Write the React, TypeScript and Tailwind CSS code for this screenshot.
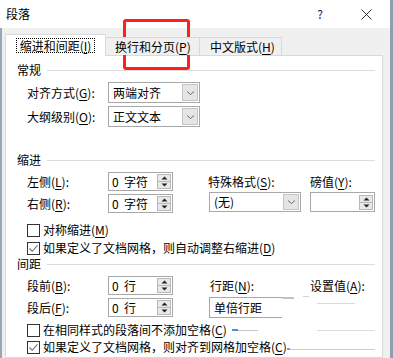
import React from 'react';

function Key({ text, k, colon = false }: { text: string; k: string; colon?: boolean }) {
  return (
    <span className="whitespace-nowrap">
      {text}(<span className="underline underline-offset-[2px]">{k}</span>){colon ? ':' : ''}
    </span>
  );
}

function Chevron() {
  return (
    <svg width="9" height="6" viewBox="0 0 9 6">
      <path d="M1 1.5 L4.5 4.5 L8 1.5" fill="none" stroke="#6b6b6b" strokeWidth="1" />
    </svg>
  );
}

function SelectBox({ text, className }: { text: string; className: string }) {
  return (
    <div className={`flex border border-[#a8a8a8] bg-white ${className}`}>
      <div className="flex-1 flex items-center pl-[4px]">{text}</div>
      <div className="w-[16px] m-px bg-[#e5e5e5] border border-[#c4c4c4] flex items-center justify-center">
        <Chevron />
      </div>
    </div>
  );
}

function Spin({ text, className }: { text: string; className: string }) {
  return (
    <div className={`flex items-center border border-[#a8a8a8] bg-white ${className}`}>
      <div className="flex-1 pl-[3px] whitespace-pre">{text}</div>
      <div className="w-[14px] h-[15px] mr-[1px] border border-[#b8b8b8] bg-[#e8e8e8] flex flex-col">
        <div className="flex-1 flex items-center justify-center">
          <svg width="7" height="4" viewBox="0 0 7 4"><path d="M0.5 3.5 L3.5 0.5 L6.5 3.5 Z" fill="#222" /></svg>
        </div>
        <div className="h-px bg-[#b8b8b8]" />
        <div className="flex-1 flex items-center justify-center">
          <svg width="7" height="4" viewBox="0 0 7 4"><path d="M0.5 0.5 L3.5 3.5 L6.5 0.5 Z" fill="#222" /></svg>
        </div>
      </div>
    </div>
  );
}

function Check({ checked, children }: { checked?: boolean; children: React.ReactNode }) {
  return (
    <div className="flex items-center h-[16px] pl-[10px]">
      <div className="w-[13px] h-[13px] border border-[#333] bg-white flex items-center justify-center">
        {checked && (
          <svg width="11" height="11" viewBox="0 0 11 11">
            <path d="M1.5 5.5 L4.2 8.3 L9.5 2.3" fill="none" stroke="#6e6e6e" strokeWidth="1.1" />
          </svg>
        )}
      </div>
      <div className="ml-[3px] whitespace-nowrap">{children}</div>
    </div>
  );
}

function Group({ title, className = '' }: { title: string; className?: string }) {
  return (
    <div className={`flex items-center h-[16px] ${className}`}>
      <span>{title}</span>
      <div className="flex-1 h-px bg-[#dcdcdc] ml-[6px]" />
    </div>
  );
}

export default function App() {
  return (
    <div className="relative w-[393px] h-[358px] overflow-hidden flex bg-white text-[12px] leading-[16px] text-black font-['Noto_Sans_CJK_SC','Noto_Sans',sans-serif]">
      <div className="w-[2px] mt-[28px] bg-[#9aa6b6]" />
      <div className="flex-1 flex flex-col">
        {/* title bar */}
        <div className="h-[28px] flex items-center bg-white">
          <span className="ml-[4px]">段落</span>
          <span className="ml-auto mr-[38px] text-[#222]">?</span>
          <svg className="mr-[18px]" width="11" height="11" viewBox="0 0 11 11">
            <path d="M0.5 0.5 L10.5 10.5 M10.5 0.5 L0.5 10.5" stroke="#333" strokeWidth="1" />
          </svg>
        </div>

        {/* body */}
        <div className="flex-1 flex flex-col bg-[#f0f0f0] pl-[3px] pr-[7px] pt-[6px]">
          <div className="relative z-10 h-[21px] flex items-end">
            <div className="h-[22px] -mb-px w-[101px] bg-white border-x border-t border-[#d9d9d9] flex items-center justify-center">
              <div className="border border-dotted border-black px-[3px] h-[15px] flex items-center">
                <Key text="缩进和间距" k="I" />
              </div>
            </div>
            <div className="h-[18px] w-[94px] bg-[#f0f0f0] border-t border-r border-[#d9d9d9] flex items-center pl-[9px]">
              <Key text="换行和分页" k="P" />
            </div>
            <div className="h-[18px] w-[82px] bg-[#f0f0f0] border-t border-r border-[#d9d9d9] flex items-center pl-[10px]">
              <Key text="中文版式" k="H" />
            </div>
          </div>

          <div className="flex-1 bg-white border border-[#d9d9d9] pl-[11px] pr-[7px] flex flex-col">
            <Group title="常规" className="mt-[6px]" />
            <div className="flex items-center pl-[10px] mt-[4px]">
              <div className="w-[81px]"><Key text="对齐方式" k="G" colon /></div>
              <SelectBox text="两端对齐" className="w-[92px] h-[21px]" />
            </div>
            <div className="flex items-center pl-[10px] mt-[3px]">
              <div className="w-[81px]"><Key text="大纲级别" k="O" colon /></div>
              <SelectBox text="正文文本" className="w-[92px] h-[21px]" />
            </div>

            <Group title="缩进" className="mt-[25px]" />
            <div className="flex mt-[4px]">
              <div className="w-[191px] pl-[10px] flex flex-col">
                <div className="flex items-center">
                  <div className="w-[81px]"><Key text="左侧" k="L" colon /></div>
                  <Spin text="0  字符" className="w-[65px] h-[19px]" />
                </div>
                <div className="flex items-center mt-[3px]">
                  <div className="w-[81px]"><Key text="右侧" k="R" colon /></div>
                  <Spin text="0  字符" className="w-[65px] h-[19px]" />
                </div>
              </div>
              <div className="flex flex-col">
                <div className="flex items-center h-[19px]">
                  <div className="w-[102px]"><Key text="特殊格式" k="S" colon /></div>
                  <Key text="磅值" k="Y" colon />
                </div>
                <div className="flex mt-px">
                  <SelectBox text="(无)" className="ml-px w-[92px] h-[20px]" />
                  <Spin text="" className="ml-[9px] w-[65px] h-[20px]" />
                </div>
              </div>
            </div>

            <div className="mt-[9px]">
              <Check><Key text="对称缩进" k="M" /></Check>
            </div>
            <div className="mt-[2px]">
              <Check checked><Key text="如果定义了文档网格，则自动调整右缩进" k="D" /></Check>
            </div>

            <Group title="间距" />
            <div className="flex mt-[4px]">
              <div className="w-[191px] pl-[10px] flex flex-col">
                <div className="flex items-center">
                  <div className="w-[81px]"><Key text="段前" k="B" colon /></div>
                  <Spin text="0  行" className="w-[65px] h-[19px]" />
                </div>
                <div className="flex items-center mt-[3px]">
                  <div className="w-[81px]"><Key text="段后" k="F" colon /></div>
                  <Spin text="0  行" className="w-[65px] h-[19px]" />
                </div>
              </div>
              <div className="flex flex-col">
                <div className="flex items-center h-[19px]">
                  <div className="w-[102px] pl-[2px]"><Key text="行距" k="N" colon /></div>
                  <Key text="设置值" k="A" colon />
                </div>
                <div className="flex items-center mt-[2px]">
                  <div className="ml-px w-[73px] h-[21px] border-l border-y border-[#a8a8a8] flex items-center pl-[4px]">
                    单倍行距
                  </div>
                  <div className="w-[12px] h-[21px] border-t-2 border-[#9a9a9a] opacity-60" />
                </div>
              </div>
            </div>

            <div className="mt-[4px]">
              <Check><Key text="在相同样式的段落间不添加空格" k="C" /></Check>
            </div>
            <div className="mt-px">
              <Check checked><Key text="如果定义了文档网格，则对齐到网格加空格" k="C" /></Check>
            </div>
          </div>
        </div>
      </div>
      <div className="w-[3px] bg-[#8e9db2]" />

      {/* erased streaks over the lower right */}
      <div className="absolute left-[303px] top-[296px] w-[6px] h-px bg-[#d4d4d4]" />
      <div className="absolute left-[317px] top-[303px] w-[38px] h-px bg-[#dadada]" />
      <div className="absolute left-[232px] top-[329px] w-[6px] h-[2px] bg-[#4a90d9]" />
      <div className="absolute left-[238px] top-[330px] w-[20px] h-px bg-[#c8c8c8]" />
      <div className="absolute left-[317px] top-[330px] w-[58px] h-px bg-[#dcdcdc]" />
      <div className="absolute left-[287px] top-[348px] w-[3px] h-[2px] bg-[#6aa4e0]" />
      <div className="absolute left-[290px] top-[349px] w-[85px] h-px bg-[#cfcfcf]" />

      {/* red highlight */}
      <div className="absolute left-[123px] top-[19px] w-[67px] h-[51px] border-[3px] border-[#ff1f1f] rounded-[3px]" />
    </div>
  );
}
